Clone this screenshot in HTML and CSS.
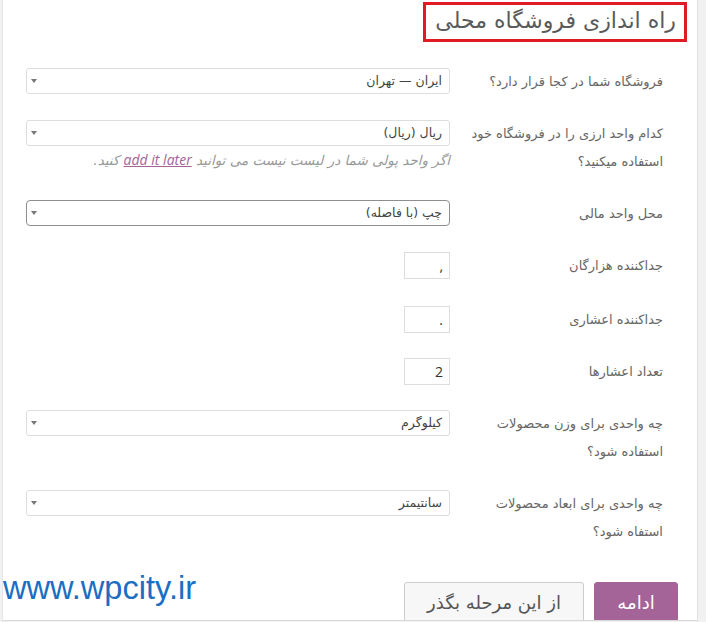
FILE: index.html
```html
<!DOCTYPE html>
<html lang="fa" dir="rtl">
<head>
<meta charset="utf-8">
<title>راه اندازی فروشگاه محلی</title>
<link rel="stylesheet" href="styles.css">
</head>
<body>
<div class="panel">
  <div class="title-wrap"><h1 class="title">راه اندازی فروشگاه محلی</h1></div>
  <div class="form">
    <div class="row">
      <div class="label">فروشگاه شما در کجا قرار دارد؟</div>
      <div class="field"><div class="select">ایران — تهران<span class="arrow"></span></div></div>
    </div>
    <div class="row">
      <div class="label">کدام واحد ارزی را در فروشگاه خود استفاده میکنید؟</div>
      <div class="field">
        <div class="select">ریال (ریال)<span class="arrow"></span></div>
        <p class="help">اگر واحد پولی شما در لیست نیست می توانید <a class="link" href="#">add it later</a> کنید.</p>
      </div>
    </div>
    <div class="row">
      <div class="label">محل واحد مالی</div>
      <div class="field"><div class="select focus">چپ (با فاصله)<span class="arrow"></span></div></div>
    </div>
    <div class="row row-tall">
      <div class="label">جداکننده هزارگان</div>
      <div class="field"><div class="small-input">,</div></div>
    </div>
    <div class="row">
      <div class="label">جداکننده اعشاری</div>
      <div class="field"><div class="small-input">.</div></div>
    </div>
    <div class="row">
      <div class="label">تعداد اعشارها</div>
      <div class="field"><div class="small-input">2</div></div>
    </div>
    <div class="row">
      <div class="label">چه واحدی برای وزن محصولات استفاده شود؟</div>
      <div class="field"><div class="select">کیلوگرم<span class="arrow"></span></div></div>
    </div>
    <div class="row">
      <div class="label">چه واحدی برای ابعاد محصولات استفاه شود؟</div>
      <div class="field"><div class="select">سانتیمتر<span class="arrow"></span></div></div>
    </div>
  </div>
  <div class="actions">
    <button class="btn primary">ادامه</button>
    <button class="btn">از این مرحله بگذر</button>
  </div>
  <div class="watermark" dir="ltr">www.wpcity.ir</div>
</div>
</body>
</html>
```
FILE: styles.css
```css
html, body {
  margin: 0;
  padding: 0;
  background: #f1f1f1;
}
body {
  font-family: "DejaVu Sans", "Noto Sans", sans-serif;
  color: #555;
  width: 706px;
  height: 622px;
  overflow: hidden;
}
.panel {
  position: relative;
  box-sizing: border-box;
  width: 696px;
  height: 621px;
  margin-left: 2px;
  margin-right: 8px;
  background: #fff;
  border-left: 1px solid #e6e6e6;
  border-right: 1px solid #e0e0e0;
  border-bottom: 1px solid #d8d8d8;
  overflow: hidden;
}
.title-wrap {
  display: flex;
  padding-right: 10px;
  padding-top: 2px;
}
.title {
  margin: 0;
  box-sizing: border-box;
  height: 40px;
  width: 264px;
  border: 3px solid #e01b24;
  padding: 0 8px 0 8px;
  font-size: 22px;
  font-weight: normal;
  line-height: 32px;
  color: #5a5a5a;
  white-space: nowrap;
}
.form {
  margin-top: 26px;
  padding-right: 34px;
  padding-left: 23px;
  display: flex;
  flex-direction: column;
  gap: 24px;
}
.row {
  display: grid;
  grid-template-columns: 213px 424px;
  align-items: start;
}
.row-tall {
  padding-bottom: 2px;
}
.label {
  font-size: 13px;
  line-height: 28px;
  color: #666;
  padding-left: 8px;
}
.field {
  display: flex;
  flex-direction: column;
  align-items: flex-start;
}
.select {
  position: relative;
  box-sizing: border-box;
  width: 424px;
  height: 26px;
  border: 1px solid #ddd;
  border-radius: 3px;
  background: #fff;
  font-size: 12.5px;
  line-height: 24px;
  color: #444;
  padding-right: 7px;
}
.select.focus {
  border-color: #8e8e8e;
  border-radius: 4px;
}
.arrow {
  position: absolute;
  left: 4px;
  top: 10px;
  width: 0;
  height: 0;
  border-left: 3px solid transparent;
  border-right: 3px solid transparent;
  border-top: 4px solid #777;
}
.help {
  margin: 0;
  height: 28px;
  font-size: 13.5px;
  line-height: 28px;
  font-style: italic;
  color: #999;
}
.link {
  color: #a46497;
  text-decoration: underline;
  font-family: "Open Sans", "DejaVu Sans", sans-serif;
  font-size: 14px;
  line-height: 20px;
}
.small-input {
  box-sizing: border-box;
  width: 46px;
  height: 27px;
  border: 1px solid #ddd;
  font-size: 14px;
  line-height: 25px;
  color: #333;
  padding-right: 6px;
  font-family: "Open Sans", "DejaVu Sans", sans-serif;
}
.actions {
  display: flex;
  gap: 10px;
  margin-top: 36px;
  padding-right: 19px;
}
.btn {
  box-sizing: border-box;
  height: 46px;
  border: 1px solid #ccc;
  border-radius: 3px;
  background: #f7f7f7;
  color: #555;
  font-family: "DejaVu Sans", sans-serif;
  font-size: 18px;
  padding: 0 10px 6px;
  width: 180px;
}
.btn.primary {
  width: 84px;
  background: #a46497;
  border-color: #a46497;
  color: #fff;
}
.watermark {
  position: absolute;
  left: 0;
  top: 568px;
  font-family: "Liberation Sans", Arial, sans-serif;
  font-size: 32.6px;
  color: #1b6ec2;
  line-height: 40px;
}
```
